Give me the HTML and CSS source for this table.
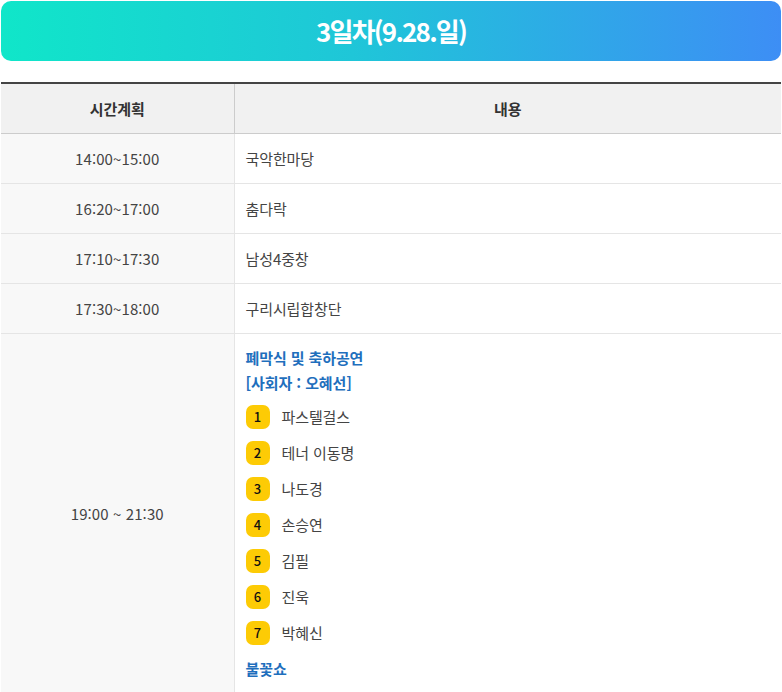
FILE: index.html
```html
<!DOCTYPE html>
<html lang="ko">
<head>
<meta charset="utf-8">
<link rel="stylesheet" href="styles.css">
</head>
<body>
<div class="page">
  <h2 class="day-title">3일차(9.28.일)</h2>
  <table class="schedule">
    <thead>
      <tr><th class="col-time">시간계획</th><th>내용</th></tr>
    </thead>
    <tbody>
      <tr><td class="time">14:00~15:00</td><td class="desc">국악한마당</td></tr>
      <tr><td class="time">16:20~17:00</td><td class="desc">춤다락</td></tr>
      <tr><td class="time">17:10~17:30</td><td class="desc">남성4중창</td></tr>
      <tr><td class="time">17:30~18:00</td><td class="desc">구리시립합창단</td></tr>
      <tr>
        <td class="time">19:00 ~ 21:30</td>
        <td class="desc detail">
          <p class="hl">폐막식 및 축하공연<br>[사회자 : 오혜선]</p>
          <ol class="acts">
            <li><span class="num">1</span>파스텔걸스</li>
            <li><span class="num">2</span>테너 이동명</li>
            <li><span class="num">3</span>나도경</li>
            <li><span class="num">4</span>손승연</li>
            <li><span class="num">5</span>김필</li>
            <li><span class="num">6</span>진욱</li>
            <li><span class="num">7</span>박혜신</li>
          </ol>
          <p class="hl">불꽃쇼</p>
        </td>
      </tr>
    </tbody>
  </table>
</div>
</body>
</html>
```
FILE: styles.css
```css
* { box-sizing: border-box; }
html, body { margin: 0; padding: 0; background: #fff; }
body {
  font-family: "Noto Sans CJK KR", "Noto Sans", sans-serif;
  color: #444;
}
.page { padding: 1px 1px 0 1px; }
.day-title {
  margin: 0 0 21px;
  height: 60px;
  border-radius: 10px;
  background: linear-gradient(90deg, #10e6c9 0%, #1fc6d8 45%, #3d8ef5 100%);
  color: #fff;
  font-size: 26px;
  font-weight: 700;
  letter-spacing: -1.8px;
  text-align: center;
  line-height: 60px;
}
.schedule {
  width: 100%;
  border-collapse: collapse;
  border-top: 2px solid #444;
  font-size: 15px;
  letter-spacing: -0.1px;
}
.schedule th {
  height: 50px;
  background: #f1f1f1;
  border-bottom: 1px solid #ccc;
  color: #333;
  font-weight: 700;
  text-align: center;
  padding: 0;
}
.schedule th.col-time { width: 233px; border-right: 1px solid #ccc; }
.schedule td {
  height: 50px;
  border-bottom: 1px solid #e5e5e5;
  padding: 0;
}
.schedule td.time {
  background: #f8f8f8;
  border-right: 1px solid #e5e5e5;
  text-align: center;
  color: #444;
  letter-spacing: 0.1px;
}
.schedule td.desc { padding-left: 11px; color: #444; }
.schedule td.detail { padding: 11px 0 13px 11px; }
.hl {
  margin: 0;
  color: #1f6fbd;
  font-weight: 700;
  line-height: 25px;
}
.acts {
  list-style: none;
  margin: 4px 0 5px;
  padding: 0;
}
.acts li {
  display: flex;
  align-items: center;
  height: 36px;
}
.num {
  width: 24px;
  height: 24px;
  border-radius: 7px;
  background: #fdcb05;
  color: #111;
  font-size: 13px;
  font-weight: 500;
  display: flex;
  align-items: center;
  justify-content: center;
  margin-right: 12px;
  letter-spacing: 0;
}
```
